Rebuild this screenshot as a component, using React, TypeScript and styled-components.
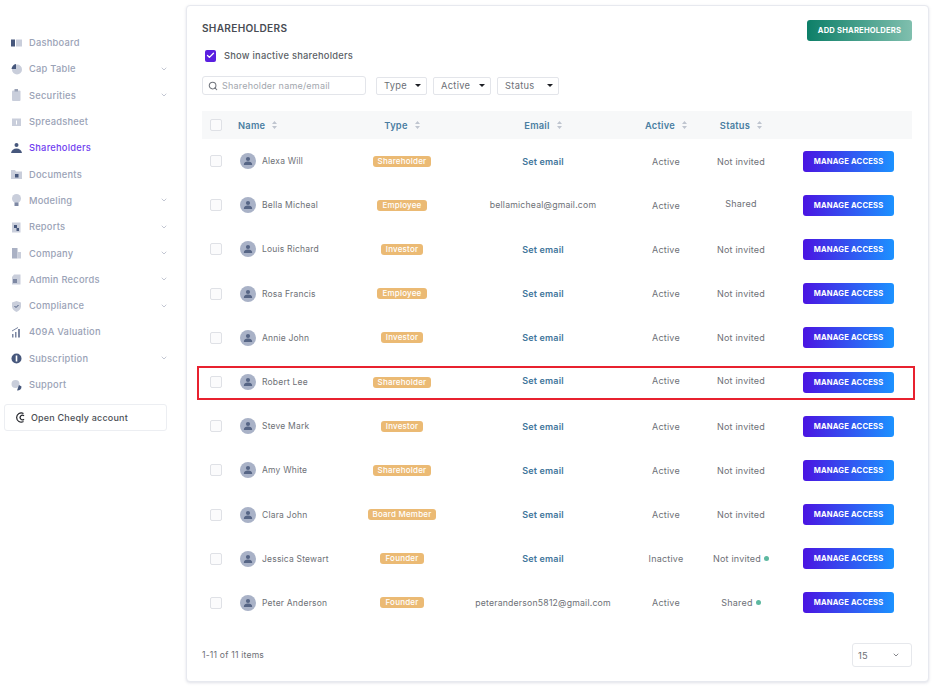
import React from 'react';
import styled, { createGlobalStyle } from 'styled-components';
import { ChevronDown, Search, Check } from 'lucide-react';

const GlobalStyle = createGlobalStyle`
    html, body { margin: 0; padding: 0; background: #fff; }
    body { font-family: "Inter", "Liberation Sans", sans-serif; }
    * { box-sizing: border-box; }
`;

const Page = styled.div`
    display: flex;
    width: 939px;
    height: 686px;
    overflow: hidden;
    background: #fff;
`;

const Sidebar = styled.nav`
    width: 186px;
    flex: none;
    padding-top: 29.5px;
`;

const NavRow = styled.div<{ $active?: boolean }>`
    display: flex;
    align-items: center;
    height: 26.3px;
    padding: 0 18px 0 11px;
    font-size: 9.3px;
    letter-spacing: 0.25px;
    font-weight: 500;
    color: ${(p) => (p.$active ? '#6f3df0' : '#9aa2b6')};
`;

const NavIcon = styled.svg`
    width: 11px;
    height: 12px;
    flex: none;
    margin-right: 7px;
`;

const NavLabel = styled.span`
    flex: 1;
`;

const NavChevron = styled(ChevronDown)`
    width: 8px;
    height: 8px;
    color: #a4abbc;
`;

const CheqlyCard = styled.div`
    display: flex;
    align-items: center;
    gap: 6px;
    width: 163px;
    height: 27px;
    margin: 6.5px 0 0 4px;
    padding-left: 10px;
    border: 1px solid #eceef2;
    border-radius: 3px;
    font-size: 9px;
    font-weight: 500;
    letter-spacing: 0.2px;
    color: #4c4f55;
`;

const Card = styled.main`
    width: 743px;
    height: 677px;
    margin-top: 5px;
    padding: 0 16px 0 15px;
    background: #fff;
    border: 1px solid #e7e9ef;
    border-radius: 4px;
    box-shadow: 0 1px 3px rgba(60, 70, 110, 0.16);
`;

const TitleRow = styled.div`
    display: flex;
    align-items: center;
    justify-content: space-between;
    height: 21px;
    margin-top: 14px;
`;

const Title = styled.h1`
    margin: 0 0 5px;
    font-size: 10.1px;
    font-weight: 600;
    letter-spacing: 0.3px;
    color: #484c53;
`;

const AddButton = styled.button`
    width: 105px;
    height: 21px;
    padding: 0;
    border: 0;
    border-radius: 3px;
    background: linear-gradient(90deg, #0d7f68, #80bfae);
    color: #fff;
    font-family: inherit;
    font-size: 7.6px;
    font-weight: 700;
    letter-spacing: 0.2px;
`;

const InactiveRow = styled.label`
    display: flex;
    align-items: center;
    gap: 8px;
    margin: 8px 0 0 3px;
    height: 13px;
    font-size: 9.3px;
    font-weight: 500;
    letter-spacing: 0.25px;
    color: #5b5f66;
`;

const PurpleCheck = styled.span`
    display: flex;
    align-items: center;
    justify-content: center;
    width: 11px;
    height: 12px;
    border-radius: 2px;
    background: #5a1fe0;
    color: #fff;
`;

const FilterRow = styled.div`
    display: flex;
    align-items: center;
    margin-top: 14px;
    height: 19px;
`;

const SearchBox = styled.div`
    display: flex;
    align-items: center;
    gap: 4px;
    width: 164px;
    height: 19px;
    padding-left: 5px;
    margin-right: 10px;
    border: 1px solid #e3e5ea;
    border-radius: 3px;
    font-size: 9px;
    letter-spacing: 0.2px;
    color: #a3a7ae;
`;

const FilterSelect = styled.div<{ $width: number }>`
    display: flex;
    align-items: center;
    justify-content: space-between;
    width: ${(p) => p.$width}px;
    height: 18px;
    margin-right: 6px;
    padding: 0 5px 0 7px;
    border: 1px solid #e3e5ea;
    border-radius: 2px;
    font-size: 9.3px;
    letter-spacing: 0.3px;
    color: #6b6f76;
`;

const Caret = styled.span`
    width: 0;
    height: 0;
    border-left: 3.5px solid transparent;
    border-right: 3.5px solid transparent;
    border-top: 3.5px solid #1d1f24;
`;

const columns = '36px 100px 128px 154px 92px 58px 142px';

const HeadRow = styled.div`
    display: grid;
    grid-template-columns: ${columns};
    align-items: center;
    height: 28px;
    margin-top: 16px;
    background: #f7f8f9;
    font-size: 9.3px;
    font-weight: 600;
    letter-spacing: 0.25px;
    color: #4a7ea2;
`;

const BodyRow = styled.div`
    position: relative;
    display: grid;
    grid-template-columns: ${columns};
    align-items: center;
    height: 44.2px;
    font-size: 9px;
    letter-spacing: 0.2px;
    color: #6d7076;
`;

const Highlight = styled.div`
    position: absolute;
    left: -5px;
    right: -3px;
    top: 6px;
    height: 34px;
    border: 2px solid #e8212f;
    pointer-events: none;
`;

const BoxCell = styled.div`
    display: flex;
    justify-content: center;
    padding-right: 10px;
    margin-left: 2px;
`;

const Box = styled.span`
    width: 12px;
    height: 12px;
    border: 1px solid #dfe1e6;
    border-radius: 2px;
    background: #fbfbfc;
`;

const HeadLabel = styled.div<{ $left?: boolean }>`
    display: flex;
    align-items: center;
    justify-content: ${(p) => (p.$left ? 'flex-start' : 'center')};
    gap: 7px;
`;

const NameCell = styled.div`
    display: flex;
    align-items: center;
    gap: 6px;
    margin-left: 2px;
    font-size: 8.5px;
    white-space: nowrap;
`;

const Center = styled.div<{ $raised?: boolean }>`
    display: flex;
    align-items: center;
    justify-content: center;
    gap: 3px;
    white-space: nowrap;
    padding-bottom: ${(p) => (p.$raised ? 3 : 0)}px;
`;

const EmailText = styled.span`
    font-size: 8.7px;
`;

const Tag = styled.span`
    height: 11px;
    line-height: 11px;
    padding: 0 5px;
    border-radius: 3px;
    background: #ebba74;
    color: #fff;
    font-size: 8px;
    font-weight: 500;
`;

const SetEmail = styled.span`
    font-weight: 600;
    color: #41769b;
`;

const Dot = styled.span`
    width: 5px;
    height: 5px;
    border-radius: 50%;
    background: #5db8a0;
`;

const ManageButton = styled.button`
    width: 91px;
    height: 21px;
    margin-left: 33px;
    padding: 0;
    border: 0;
    border-radius: 3px;
    background: linear-gradient(90deg, #4a14e2, #1c92ff);
    color: #fff;
    font-family: inherit;
    font-size: 7.6px;
    font-weight: 700;
    letter-spacing: 0.2px;
`;

const Footer = styled.div`
    display: flex;
    align-items: center;
    justify-content: space-between;
    height: 24px;
    margin-top: 18px;
    font-size: 8.6px;
    letter-spacing: 0.2px;
    color: #6d7076;
`;

const PageSize = styled.div`
    display: flex;
    align-items: center;
    justify-content: space-between;
    width: 60px;
    height: 24px;
    padding: 0 11px 0 5px;
    border: 1px solid #e6e8ec;
    border-radius: 3px;
    font-size: 9.3px;
`;

const SortIcon = () => (
    <svg width="5" height="8" viewBox="0 0 5 8">
        <path d="M2.5 0L5 3H0zM2.5 8L0 5h5z" fill="#bfc5cf" />
    </svg>
);

const Avatar = () => (
    <svg width="16" height="16" viewBox="0 0 16 16">
        <circle cx="8" cy="8" r="8" fill="#a9b2c7" />
        <circle cx="8" cy="6" r="2.1" fill="#566585" />
        <path d="M3.8 12c0-2.4 1.8-3.4 4.2-3.4s4.2 1 4.2 3.4z" fill="#566585" />
    </svg>
);

const dark = '#46577c';
const light = '#c9cedb';

const navIcons: Record<string, React.ReactNode> = {
    dashboard: <><rect x="0" y="2.5" width="4" height="7" fill={dark} /><rect x="5" y="2.5" width="6" height="7" fill={light} /></>,
    cap: <><circle cx="6" cy="6.5" r="5" fill={light} /><path d="M5 1v5H0.5C0.8 3.4 2.5 1.4 5 1z" fill={dark} /></>,
    securities: <><rect x="1" y="1.5" width="8.5" height="10.5" rx="1" fill={light} /><rect x="3.5" y="0" width="3.5" height="2.5" fill="#9aa2b6" /></>,
    sheet: <><rect x="1" y="2.5" width="9" height="7.5" fill={light} /><rect x="5" y="4.5" width="1" height="4" fill="#fff" /></>,
    person: <><circle cx="5.5" cy="3" r="2" fill={dark} /><path d="M0 11c.6-3 2.6-4.5 5.5-4.5S10.400 8 11 11z" fill={dark} /></>,
    docs: <><path d="M0 2h4l1 1.500h6V11H0z" fill={light} /><rect x="4" y="6" width="3.500" height="3.500" fill={dark} /></>,
    bulb: <><circle cx="5.500" cy="4.500" r="4.500" fill={light} /><rect x="3.500" y="8.500" width="4" height="3.500" fill="#7d88a3" /></>,
    reports: <><rect x="1" y="1.500" width="8.500" height="10" fill={light} /><path d="M3 4h3v3H3zM5.500 7h2.500v3H5.500z" fill={dark} /></>,
    company: <><rect x="1" y="1" width="5.500" height="10.500" fill="#aab1c4" /><rect x="6.500" y="5" width="3.500" height="6.500" fill={light} /></>,
    admin: <><path d="M3 1.500h6.500v10H1V4z" fill={light} /><rect x="2" y="6" width="4" height="4" fill="#7d88a3" /></>,
    shield: <><path d="M5.500 1l4.500 1.500v4c0 2.500-2 4.500-4.500 5.500C3 11 1 9 1 6.500v-4z" fill={light} /><path d="M3.500 6l1.500 1.500 2.500-2.500" stroke={dark} fill="none" /></>,
    chart: <><rect x="1" y="8" width="1.500" height="3.500" fill="#7d88a3" /><rect x="4" y="6" width="1.500" height="5.500" fill="#7d88a3" /><rect x="7" y="3" width="2" height="8.500" fill="#7d88a3" /><path d="M1 5l6-3.500" stroke="#7d88a3" /></>,
    coin: <><circle cx="5.500" cy="6.500" r="5" fill={dark} /><rect x="4.700" y="3.500" width="1.600" height="6" fill="#fff" /></>,
    support: <><circle cx="4.500" cy="5" r="4" fill={light} /><path d="M6 11.500c3 0 4.500-1.500 4.500-4L8 6z" fill={dark} /></>,
};

const nav = [
    { label: 'Dashboard', icon: 'dashboard' },
    { label: 'Cap Table', icon: 'cap', more: true },
    { label: 'Securities', icon: 'securities', more: true },
    { label: 'Spreadsheet', icon: 'sheet' },
    { label: 'Shareholders', icon: 'person', active: true },
    { label: 'Documents', icon: 'docs' },
    { label: 'Modeling', icon: 'bulb', more: true },
    { label: 'Reports', icon: 'reports', more: true },
    { label: 'Company', icon: 'company', more: true },
    { label: 'Admin Records', icon: 'admin', more: true },
    { label: 'Compliance', icon: 'shield', more: true },
    { label: '409A Valuation', icon: 'chart' },
    { label: 'Subscription', icon: 'coin', more: true },
    { label: 'Support', icon: 'support' },
];

type Holder = { name: string; type: string; email?: string; active?: string; status?: string; dot?: boolean };

const holders: Holder[] = [
    { name: 'Alexa Will', type: 'Shareholder' },
    { name: 'Bella Micheal', type: 'Employee', email: 'bellamicheal@gmail.com', status: 'Shared' },
    { name: 'Louis Richard', type: 'Investor' },
    { name: 'Rosa Francis', type: 'Employee' },
    { name: 'Annie John', type: 'Investor' },
    { name: 'Robert Lee', type: 'Shareholder' },
    { name: 'Steve Mark', type: 'Investor' },
    { name: 'Amy White', type: 'Shareholder' },
    { name: 'Clara John', type: 'Board Member' },
    { name: 'Jessica Stewart', type: 'Founder', active: 'Inactive', dot: true },
    { name: 'Peter Anderson', type: 'Founder', email: 'peteranderson5812@gmail.com', status: 'Shared', dot: true },
];

export default function App() {
    return (
        <Page>
            <GlobalStyle />
            <Sidebar>
                {nav.map((item) => (
                    <NavRow key={item.label} $active={item.active}>
                        <NavIcon viewBox="0 0 11 12">{navIcons[item.icon]}</NavIcon>
                        <NavLabel>{item.label}</NavLabel>
                        {item.more && <NavChevron strokeWidth={2} />}
                    </NavRow>
                ))}
                <CheqlyCard>
                    <svg width="10" height="11" viewBox="0 0 10 11" fill="none" stroke="#22242a" strokeWidth="1.200">
                        <path d="M8.500 1.500A4.600 4.600 0 1 0 8.500 9.500" />
                        <path d="M9 3.800A2.300 2.300 0 1 0 9 7.200" />
                    </svg>
                    Open Cheqly account
                </CheqlyCard>
            </Sidebar>
            <Card>
                <TitleRow>
                    <Title>SHAREHOLDERS</Title>
                    <AddButton>ADD SHAREHOLDERS</AddButton>
                </TitleRow>
                <InactiveRow>
                    <PurpleCheck><Check size={9} strokeWidth={3.5} /></PurpleCheck>
                    Show inactive shareholders
                </InactiveRow>
                <FilterRow>
                    <SearchBox>
                        <Search size={10} color="#70747c" strokeWidth={2.500} />
                        Shareholder name/email
                    </SearchBox>
                    <FilterSelect $width={51}>Type<Caret /></FilterSelect>
                    <FilterSelect $width={58}>Active<Caret /></FilterSelect>
                    <FilterSelect $width={62}>Status<Caret /></FilterSelect>
                </FilterRow>
                <HeadRow>
                    <BoxCell><Box /></BoxCell>
                    <HeadLabel $left>Name <SortIcon /></HeadLabel>
                    <HeadLabel>Type <SortIcon /></HeadLabel>
                    <HeadLabel>Email <SortIcon /></HeadLabel>
                    <HeadLabel>Active <SortIcon /></HeadLabel>
                    <HeadLabel>Status <SortIcon /></HeadLabel>
                    <div />
                </HeadRow>
                {holders.map((h) => {
                    const raised = h.name === 'Robert Lee';
                    return (
                        <BodyRow key={h.name}>
                            <BoxCell><Box /></BoxCell>
                            <NameCell><Avatar />{h.name}</NameCell>
                            <Center><Tag>{h.type}</Tag></Center>
                            <Center $raised={raised}>
                                {h.email ? <EmailText>{h.email}</EmailText> : <SetEmail>Set email</SetEmail>}
                            </Center>
                            <Center $raised={raised}>{h.active || 'Active'}</Center>
                            <Center $raised={raised || h.name === 'Bella Micheal'}>
                                {h.status || 'Not invited'}{h.dot && <Dot />}
                            </Center>
                            <ManageButton>MANAGE ACCESS</ManageButton>
                            {raised && <Highlight />}
                        </BodyRow>
                    );
                })}
                <Footer>
                    1-11 of 11 items
                    <PageSize>15<ChevronDown size={8} strokeWidth={2.500} /></PageSize>
                </Footer>
            </Card>
        </Page>
    );
}
